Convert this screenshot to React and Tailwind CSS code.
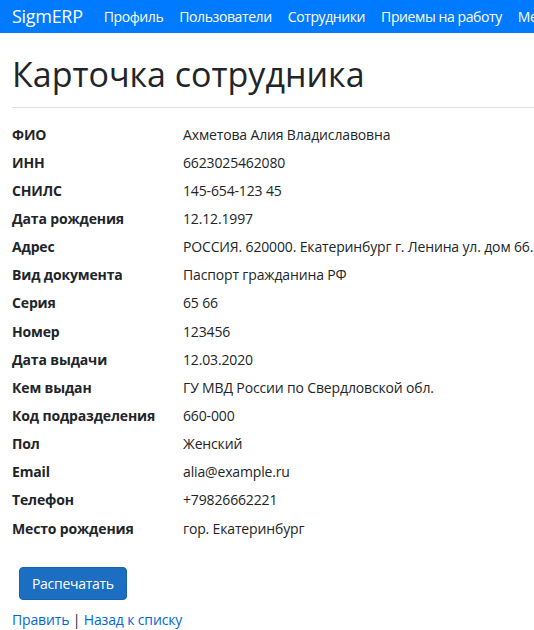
import React from "react";

const rows = [
  ["ФИО", "Ахметова Алия Владиславовна"],
  ["ИНН", "6623025462080"],
  ["СНИЛС", "145-654-123 45"],
  ["Дата рождения", "12.12.1997"],
  ["Адрес", "РОССИЯ. 620000. Екатеринбург г. Ленина ул. дом 66."],
  ["Вид документа", "Паспорт гражданина РФ"],
  ["Серия", "65 66"],
  ["Номер", "123456"],
  ["Дата выдачи", "12.03.2020"],
  ["Кем выдан", "ГУ МВД России по Свердловской обл."],
  ["Код подразделения", "660-000"],
  ["Пол", "Женский"],
  ["Email", "alia@example.ru"],
  ["Телефон", "+79826662221"],
  ["Место рождения", "гор. Екатеринбург"],
];

export default function App() {
  return (
    <div
      className="w-[534px] h-[630px] overflow-hidden bg-white text-[#212529]"
      style={{ fontFamily: '"Open Sans", "Noto Sans", sans-serif' }}
    >
      <nav className="h-[33px] bg-[#007bff] flex items-center pl-3 whitespace-nowrap overflow-hidden">
        <span className="text-[18px] text-white mr-[13px] tracking-[-0.3px]">SigmERP</span>
        <div className="flex text-[14px] text-white tracking-[-0.4px]">
          <span className="px-2">Профиль</span>
          <span className="px-2">Пользователи</span>
          <span className="px-2">Сотрудники</span>
          <span className="px-2">Приемы на работу</span>
          <span className="px-2">Менеджеры</span>
        </div>
      </nav>
      <main className="px-3">
        <h1 className="text-[34px] leading-[42px] mt-[20px] font-normal">
          Карточка сотрудника
        </h1>
        <hr className="mt-[12px] border-t border-[#e0e0e0] -mr-3" />
        <dl className="mt-[12px] text-[14px] tracking-[-0.15px]">
          {rows.map(([k, v]) => (
            <div key={k} className="flex h-[28.15px] items-center whitespace-nowrap">
              <dt className="w-[171px] shrink-0 font-bold">{k}</dt>
              <dd>{v}</dd>
            </div>
          ))}
        </dl>
        <div className="mt-[25px] pl-[7px]">
          <button className="h-[33px] px-3 rounded bg-[#1b6ec2] border border-[#1861ac] text-white text-[14px] tracking-[-0.3px]">
            Распечатать
          </button>
        </div>
        <div className="mt-[10px] text-[14px] leading-[20px] tracking-[-0.15px]">
          <a className="text-[#0366d6]">Править</a> | <a className="text-[#0366d6]">Назад к списку</a>
        </div>
      </main>
    </div>
  );
}
